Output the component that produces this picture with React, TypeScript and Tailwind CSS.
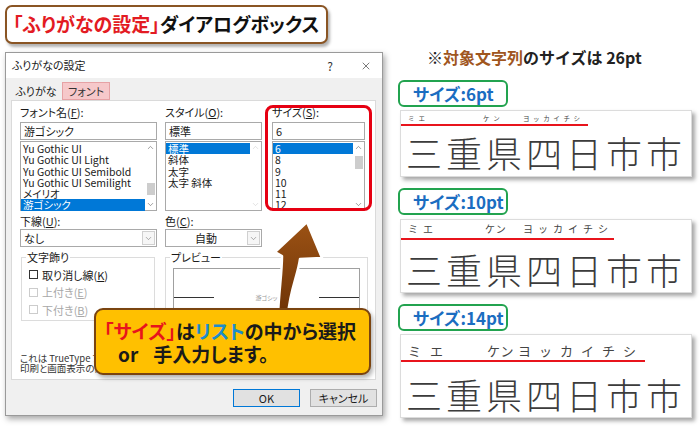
import React from 'react';
import { ChevronUp, ChevronDown, X } from 'lucide-react';

const fontList = ['Yu Gothic UI', 'Yu Gothic UI Light', 'Yu Gothic UI Semibold', 'Yu Gothic UI Semilight', 'メイリオ', '游ゴシック'];
const styleList = ['標準', '斜体', '太字', '太字 斜体'];
const sizeList = ['6', '8', '9', '10', '11', '12'];

const ScrollBar = ({ thumb, disabled }: { thumb?: string; disabled?: boolean }) => (
  <div className="flex w-[11px] shrink-0 flex-col items-center bg-white">
    <div className="flex h-[11px] items-center">
      <ChevronUp size={9} strokeWidth={1.6} className={disabled ? 'text-[#cfcfcf]' : 'text-[#606060]'} />
    </div>
    <div className="flex-1">{thumb && <div className={`w-[8px] bg-[#cdcdcd] ${thumb}`} />}</div>
    <div className="flex h-[11px] items-center">
      <ChevronDown size={9} strokeWidth={1.6} className={disabled ? 'text-[#cfcfcf]' : 'text-[#606060]'} />
    </div>
  </div>
);

const ListBox = ({ items, selected, thumb, disabled }: { items: string[]; selected: number; thumb?: string; disabled?: boolean }) => (
  <div className="mt-[1px] flex h-[70px] border border-[#a9a9a9] bg-white">
    <div className="flex-1 pt-[1px] text-[10.5px]">
      {items.map((item, i) => (
        <div
          key={item}
          className={`h-[11.3px] whitespace-nowrap px-[2px] leading-[11.3px] ${i === selected ? 'bg-[#0078d7] text-white' : ''}`}
        >
          {item}
        </div>
      ))}
    </div>
    <ScrollBar thumb={thumb} disabled={disabled} />
  </div>
);

const Field = ({ text }: { text: string }) => (
  <div className="mt-[4px] flex h-[18px] items-center border border-[#a9a9a9] bg-white px-[3px]">{text}</div>
);

const Label = ({ name, k }: { name: string; k: string }) => (
  <div className="h-[12px] leading-[12px]">
    {name}(<u>{k}</u>):
  </div>
);

const Select = ({ text, center }: { text: string; center?: boolean }) => (
  <div className="mt-[2px] flex h-[18px] border border-[#a9a9a9] bg-white">
    <div className={`flex flex-1 items-center px-[3px] ${center ? 'justify-center' : ''}`}>{text}</div>
    <div className="m-[1px] flex w-[13px] items-center justify-center border border-[#d0d0d0] bg-[#f6f6f6]">
      <ChevronDown size={9} strokeWidth={1.5} className="text-[#707070]" />
    </div>
  </div>
);

const Check = ({ label, k, disabled }: { label: string; k: string; disabled?: boolean }) => (
  <div className={`flex h-[17.5px] items-center pl-[7px] ${disabled ? 'text-[#a8a8a8]' : ''}`}>
    <div className={`h-[9px] w-[9px] border ${disabled ? 'border-[#cccccc]' : 'border-[#333]'} bg-white`} />
    <span className="ml-[4px]">
      {label}(<u>{k}</u>)
    </span>
  </div>
);

const Dialog = () => (
  <div className="mt-[8px] flex h-[364px] w-[378px] flex-col border border-[#9a9a9a] bg-[#f0f0f0] text-[11px] text-[#1a1a1a] shadow-[2px_3px_6px_rgba(0,0,0,0.35)] [font-feature-settings:'palt']">
    <div className="flex h-[25px] shrink-0 items-center bg-white pl-[6px]">
      <span>ふりがなの設定</span>
      <span className="ml-auto text-[12px] text-[#333]">?</span>
      <X size={12} strokeWidth={1.3} className="ml-[27px] mr-[10px] text-[#333]" />
    </div>
    <div className="flex h-[22px] shrink-0 items-end pl-[5px]">
      <div className="flex h-[18px] w-[50px] items-center justify-center">ふりがな</div>
      <div className="ml-[1px] flex h-[18px] w-[48px] items-center justify-center border border-[#e6a2a5] bg-[#f6c8ca] text-[#333]">
        フォント
      </div>
    </div>
    <div className="ml-[5px] h-[280px] w-[365px] shrink-0 border border-[#dadada] bg-white">
      <div className="flex pl-[8px] pt-[5px]">
        <div className="w-[137px]">
          <Label name="フォント名" k="F" />
          <Field text="游ゴシック" />
          <ListBox items={fontList} selected={5} thumb="mt-[30px] h-[12px]" />
        </div>
        <div className="ml-[8px] w-[97px]">
          <Label name="スタイル" k="O" />
          <Field text="標準" />
          <ListBox items={styleList} selected={0} disabled />
        </div>
        <div className="ml-[10px] w-[93px]">
          <Label name="サイズ" k="S" />
          <Field text="6" />
          <ListBox items={sizeList} selected={0} thumb="mt-[3px] h-[13px]" />
        </div>
      </div>
      <div className="mt-[4px] flex pl-[8px]">
        <div className="w-[137px]">
          <Label name="下線" k="U" />
          <Select text="なし" />
        </div>
        <div className="ml-[8px] w-[97px]">
          <Label name="色" k="C" />
          <Select text="自動" center />
        </div>
      </div>
      <div className="mt-[4px] flex pl-[8px]">
        <fieldset className="ml-[1px] h-[70px] w-[134px] border border-[#dcdcdc]">
          <legend className="ml-[4px] px-[1px] leading-[12px]">文字飾り</legend>
          <div className="pt-[3px]">
            <Check label="取り消し線" k="K" />
            <Check label="上付き" k="E" disabled />
            <Check label="下付き" k="B" disabled />
          </div>
        </fieldset>
        <fieldset className="ml-[10px] h-[96px] w-[203px] border border-[#dcdcdc]">
          <legend className="ml-[4px] px-[1px] leading-[12px]">プレビュー</legend>
          <div className="ml-[7px] mt-[5px] h-[70px] w-[187px] border border-[#a0a0a0] bg-white">
            <div className="mt-[24px] flex items-center justify-between">
              <div className="h-px w-[40px] bg-[#333]" />
              <span className="text-[6px] text-[#999]">游ゴシッ</span>
              <div className="h-px w-[40px] bg-[#333]" />
            </div>
          </div>
        </fieldset>
      </div>
      <div className="mt-[6px] pl-[8px] text-[9.5px] leading-[10px] text-[#333]">
        <div>これは TrueType フォントです。</div>
        <div>印刷と画面表示の両方で使用されます。</div>
      </div>
    </div>
    <div className="flex justify-end gap-[10px] pr-[5px] pt-[9px]">
      <div className="flex h-[18px] w-[67px] items-center justify-center border border-[#0078d7] bg-[#e1e1e1]">OK</div>
      <div className="flex h-[18px] w-[67px] items-center justify-center border border-[#adadad] bg-[#e1e1e1]">キャンセル</div>
    </div>
  </div>
);

type CardProps = {
  label: string;
  labelClass: string;
  cardClass: string;
  padClass: string;
  rubyClass: string;
  rubyTrack: [string, string, string];
  rubyWidth: [string, string];
  lineClass: string;
  textClass: string;
};

const SampleCard = (p: CardProps) => (
  <>
    <div
      className={`flex h-[27px] w-[110px] items-center rounded-[6px] border-2 border-[#22a34f] bg-white pl-[13px] text-[17px] font-bold leading-none text-[#1b6dc1] [font-feature-settings:'palt'] ${p.labelClass}`}
    >
      {p.label}
    </div>
    <div className={`ml-[2px] flex w-[292px] flex-col border border-[#dcdcdc] bg-white shadow-[3px_3px_4px_rgba(0,0,0,0.35)] ${p.cardClass} ${p.padClass}`}>
      <div className={`flex whitespace-nowrap pl-[7px] text-[#444] ${p.rubyClass}`}>
        <span className={`${p.rubyWidth[0]} ${p.rubyTrack[0]}`}>ミエ</span>
        <span className={`${p.rubyWidth[1]} ${p.rubyTrack[1]}`}>ケン</span>
        <span className={p.rubyTrack[2]}>ヨッカイチシ</span>
      </div>
      <div className={`h-[2px] bg-[#e8141c] ${p.lineClass}`} />
      <div className={`h-[40px] whitespace-nowrap pl-[5px] text-[36px] font-extralight leading-[40px] tracking-[4px] text-[#3c3c3c] ${p.textClass}`}>
        三重県四日市市
      </div>
    </div>
  </>
);

const Arrow = () => (
  <svg className="absolute left-[260px] top-[215px]" width="70" height="100" viewBox="0 0 70 100">
    <defs>
      <linearGradient id="arrowFill" x1="0" y1="0" x2="0" y2="1">
        <stop offset="0" stopColor="#9c5214" />
        <stop offset="1" stopColor="#6d3307" />
      </linearGradient>
    </defs>
    <path
      d="M47,7 L62,43 L40,44 C38,60 30,75 28,100 L18,100 C19,75 22,58 22,41 L15,37 Z"
      fill="url(#arrowFill)"
      stroke="#ffffff"
      strokeWidth="2.5"
      strokeLinejoin="round"
    />
  </svg>
);

const Callout = () => (
  <div className="absolute left-[94px] top-[308px] flex h-[67px] w-[277px] flex-col rounded-[9px] border-2 border-[#7a4410] bg-[#ffc000] pt-[9px] text-[19px] font-bold text-[#1a1a1a] shadow-[2px_3px_4px_rgba(0,0,0,0.3)] [font-feature-settings:'palt']">
    <div className="h-[24px] whitespace-nowrap pl-[8px] leading-[24px]">
      <span className="text-[#e8141c]">「サイズ」</span>は<span className="text-[#1d8ccc]">リスト</span>の中から選択
    </div>
    <div className="flex h-[22px] whitespace-nowrap pl-[22px] leading-[22px]">
      <span>or</span>
      <span className="ml-[15px]">手入力します。</span>
    </div>
  </div>
);

export default function App() {
  return (
    <div className="relative flex h-[427px] w-[700px] overflow-hidden bg-white font-['Noto_Sans_CJK_JP',sans-serif]">
      <div className="w-[390px] shrink-0 pl-[5px] pt-[5px]">
        <div className="flex h-[39px] w-[323px] items-center rounded-[7px] border-[2.5px] border-[#8a5524] bg-white pl-[6px] text-[19px] font-bold shadow-[2px_3px_3px_rgba(0,0,0,0.3)] [font-feature-settings:'palt']">
          <span className="text-[#e31b23]">「ふりがなの設定」</span>
          <span className="text-[#111]">ダイアログボックス</span>
        </div>
        <Dialog />
      </div>

      <div className="flex flex-col pl-[8px]">
        <div className="mt-[47px] h-[20px] whitespace-nowrap pl-[29px] text-[16px] font-bold leading-[20px] text-[#222]">
          ※<span className="text-[#a0561e]">対象文字列</span>のサイズは 26pt
        </div>
        <SampleCard
          label="サイズ:6pt"
          labelClass="mt-[13px]"
          cardClass="mt-[3px] h-[67px]"
          padClass="pt-[2px]"
          rubyClass="h-[10px] text-[6.5px] leading-[10px]"
          rubyTrack={['tracking-[4px]', 'tracking-[4px]', 'tracking-[3.6px]']}
          rubyWidth={['w-[75px]', 'w-[40px]']}
          lineClass="mt-[1px] w-[187px]"
          textClass="mt-[6px]"
        />
        <SampleCard
          label="サイズ:10pt"
          labelClass="mt-[11px] h-[26px]"
          cardClass="mt-[4px] h-[74px]"
          padClass="pt-[3px]"
          rubyClass="h-[12px] text-[10px] leading-[12px]"
          rubyTrack={['tracking-[5px]', 'tracking-[1px]', 'tracking-[5px]']}
          rubyWidth={['w-[77px]', 'w-[38px]']}
          lineClass="mt-[3px] w-[213px]"
          textClass="mt-[9px]"
        />
        <SampleCard
          label="サイズ:14pt"
          labelClass="mt-[11px]"
          cardClass="mt-[3px] h-[84px]"
          padClass="pt-[8px]"
          rubyClass="h-[16px] text-[13px] leading-[16px]"
          rubyTrack={['tracking-[9px]', 'tracking-[1px]', 'tracking-[8px]']}
          rubyWidth={['w-[79px]', 'w-[31px]']}
          lineClass="mt-[1px] w-[244px]"
          textClass="mt-[12px]"
        />
      </div>

      <div className="absolute left-[265px] top-[105px] h-[106px] w-[107px] rounded-[8px] border-[3px] border-[#e60012]" />
      <Arrow />
      <Callout />
    </div>
  );
}
